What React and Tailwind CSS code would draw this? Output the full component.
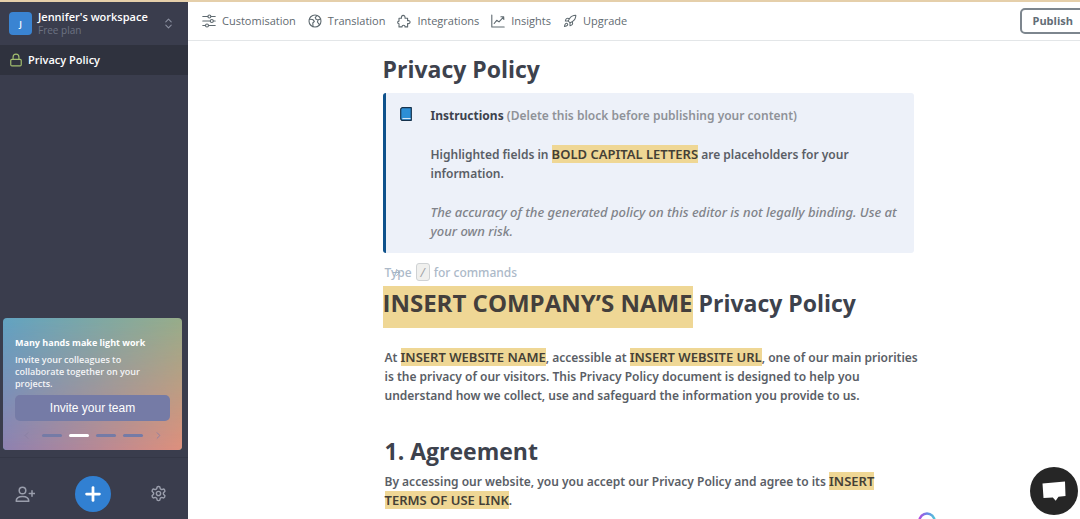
import React from "react";
import {
  LuChevronsUpDown,
  LuLock,
  LuRocket,
  LuSettings,
  LuPlus,
  LuChevronLeft,
  LuChevronRight,
  LuArrowRight,
} from "react-icons/lu";

const SlidersIcon = () => (
  <svg viewBox="0 0 14 14" className="w-[14px] h-[14px]" fill="none" stroke="currentColor" strokeWidth="1.1" strokeLinecap="round">
    <path d="M.8 2.5h5M9 2.5h4.2M.8 7h7.4M11.4 7h1.8M.8 11.5h2.6M6.6 11.5h6.6" />
    <circle cx="7.4" cy="2.5" r="1.5" />
    <circle cx="9.8" cy="7" r="1.5" />
    <circle cx="5" cy="11.5" r="1.5" />
  </svg>
);

const GlobeIcon = () => (
  <svg viewBox="0 0 14 14" className="w-[14px] h-[14px]" fill="none" stroke="currentColor" strokeWidth="1.1" strokeLinejoin="round" strokeLinecap="round">
    <circle cx="7" cy="7" r="6" />
    <path d="M1.3 5.2l3.4.3 1.7 1.8-1.6 1.7.2 3.5M9 1.5L7.2 3.6l1 1.9 2 .3L9.4 8l2 2.7M10.2 5.8l2.6-.8" />
  </svg>
);

const PuzzleIcon = () => (
  <svg viewBox="0 0 14 14" className="w-[14px] h-[14px]" fill="none" stroke="currentColor" strokeWidth="1.1" strokeLinejoin="round" strokeLinecap="round">
    <path d="M2 4.2h2.5c-1-3.8 4.3-3.8 3.5 0h2.6v2.5c3.3-.8 3.3 3.6 0 2.8v3.4H8c.3-2.3-3.2-2.3-2.9 0H2V9.700c-1.8-.2-1.8-2.4 0-2.6z" />
  </svg>
);

const ChartIcon = () => (
  <svg viewBox="0 0 14 14" className="w-[14px] h-[14px]" fill="none" stroke="currentColor" strokeWidth="1.1" strokeLinecap="round" strokeLinejoin="round">
    <path d="M.8 1v12h12.4M3.2 9.5l2.5-3.2 2.3 1.6 4.7-5M9.9 2.7l2.8.2.1 2.6" />
  </svg>
);

const AddUserIcon = () => (
  <svg viewBox="0 0 20 18" className="w-[20px] h-[18px]" fill="none" stroke="currentColor" strokeWidth="1.5" strokeLinecap="round" strokeLinejoin="round">
    <circle cx="7.5" cy="5.5" r="3.3" />
    <path d="M1.2 16.2c0-3.2 2.3-4.8 6.3-4.8s6.3 1.6 6.3 4.8zM17 5.8v5.4M14.3 8.5h5.4" />
  </svg>
);

const BookIcon = () => (
  <svg viewBox="0 0 12 14" className="w-[12px] h-[14px]">
    <path d="M2 .7h9.3v12.6H1.8L.7 12V2z" fill="#2c8fd6" stroke="#16324c" strokeWidth="1.2" strokeLinejoin="round" />
    <path d="M2.4 11.6h8.2" stroke="#e6f1fa" strokeWidth="1" />
  </svg>
);

const menu = [
  { label: "Customisation", icon: <SlidersIcon /> },
  { label: "Translation", icon: <GlobeIcon /> },
  { label: "Integrations", icon: <PuzzleIcon /> },
  { label: "Insights", icon: <ChartIcon /> },
  { label: "Upgrade", icon: <LuRocket className="w-[14px] h-[14px]" strokeWidth={1.8} /> },
];

const slides = [false, true, false, false];

const Mark = ({ children }) => (
  <mark className="bg-[#efd795] text-[#443f36] text-[13px] font-semibold">{children}</mark>
);

const Sidebar = () => {
  return (
    <aside className="w-[188px] shrink-0 flex flex-col bg-[#3a3d4d] text-white">
      <button className="h-[43px] flex items-center gap-[6px] pl-[9px] pr-[13px] text-left">
        <span className="w-[23px] h-[23px] rounded-[4px] bg-[#3a84d2] text-[9px] font-semibold flex items-center justify-center">
          J
        </span>
        <span className="flex-1 flex flex-col">
          <span className="text-[11px] leading-[14px] font-semibold whitespace-nowrap">Jennifer's workspace</span>
          <span className="text-[10px] leading-[13px] text-[#6d7383]">Free plan</span>
        </span>
        <LuChevronsUpDown className="w-[13px] h-[13px] text-[#8b90a0]" />
      </button>
      <nav>
        <a href="#privacy" className="h-[30px] flex items-center gap-[5px] pl-[9px] bg-[#2f323e] text-[11px] font-semibold">
          <LuLock className="w-[14px] h-[14px] text-[#a3bf6f]" />
          Privacy Policy
        </a>
      </nav>
      <section className="mt-auto ml-[3px] mr-[6px] h-[132px] rounded-[4px] px-[12px] pt-[18px] bg-[linear-gradient(to_right,#62a3c2,#97ad8a)] relative overflow-hidden">
        <div className="absolute inset-0 bg-[linear-gradient(to_right,#8e81b0,#de8f7c)] [mask-image:linear-gradient(to_bottom,transparent,black)]"></div>
        <div className="relative">
          <h2 className="text-[9px] leading-[14px] font-bold">Many hands make light work</h2>
          <p className="text-[9px] leading-[12px] font-semibold mt-[4px] text-[#f4f4f6]">
            Invite your colleagues to
            <br />
            collaborate together on your
            <br />
            projects.
          </p>
          <button className="w-full h-[26px] mt-[5px] rounded-[5px] bg-[#757ba6] text-[12px] font-medium font-['Liberation_Sans',sans-serif]">
            Invite your team
          </button>
          <div className="flex items-center justify-center gap-[7px] mt-[9px] text-[#8a7fa3]">
            <button aria-label="Previous" className="mr-[3px]">
              <LuChevronLeft className="w-[11px] h-[11px]" />
            </button>
            {slides.map((active, index) => (
              <span key={index} className={`w-[20px] h-[3px] rounded-full ${active ? "bg-white" : "bg-[#757ba6]"}`}></span>
            ))}
            <button aria-label="Next" className="ml-[3px]">
              <LuChevronRight className="w-[11px] h-[11px]" />
            </button>
          </div>
        </div>
      </section>
      <div className="mt-[7px] h-[62px] pt-[10px] border-t border-[#343746] flex items-center justify-between pl-[15px] pr-[21px] text-[#9a9eac]">
        <button aria-label="Invite people">
          <AddUserIcon />
        </button>
        <button aria-label="Add new" className="w-[36px] h-[36px] rounded-full bg-[#3180d2] text-white flex items-center justify-center">
          <LuPlus className="w-[22px] h-[22px]" strokeWidth={3} />
        </button>
        <button aria-label="Settings">
          <LuSettings className="w-[17px] h-[17px]" />
        </button>
      </div>
    </aside>
  );
};

const Header = () => {
  return (
    <header className="h-[39px] shrink-0 flex items-center justify-between pl-[14px] border-b border-[#e3e6e8] text-[11px] font-medium text-[#5f6a70]">
      <nav className="flex items-center gap-[12px]">
        {menu.map((item) => (
          <button key={item.label} className="flex items-center gap-[6px]">
            {item.icon}
            {item.label}
          </button>
        ))}
      </nav>
      <button className="h-[26px] pl-[10px] pr-[10px] -mr-[5px] border-2 border-[#7d868e] rounded-[5px] font-bold text-[#626d76]">
        Publish
      </button>
    </header>
  );
};

const Document = () => {
  return (
    <article className="w-[531px] mx-auto text-[12px] leading-[19px] font-semibold text-[#5a5e66] font-['Noto_Sans','Open_Sans',sans-serif]">
      <h1 className="text-[23px] leading-[32px] font-bold text-[#3d424d] mt-[12px] font-['Open_Sans',sans-serif]">Privacy Policy</h1>
      <section className="mt-[8px] h-[160px] flex border-l-[3px] border-[#0f528c] rounded-[3px] bg-[#edf1f9] pt-[13px] pl-[14px]">
        <div className="w-[31px] shrink-0 pt-px">
          <BookIcon />
        </div>
        <div className="whitespace-nowrap">
          <p className="text-[#8f9298]">
            <strong className="font-bold text-[#3d424d]">Instructions</strong> (Delete this block before publishing your content)
          </p>
          <p className="mt-[20px]">
            Highlighted fields in <Mark>BOLD CAPITAL LETTERS</Mark> are placeholders for your
            <br />
            information.
          </p>
          <p className="mt-[20px] italic text-[13px] font-medium text-[#808389]">
            The accuracy of the generated policy on this editor is not legally binding. Use at
            <br />
            your own risk.
          </p>
        </div>
      </section>
      <p className="mt-[9px] h-[20px] flex items-center gap-[4px] pl-[2px] font-medium text-[#acb9c8]">
        <span className="relative">
          Type
          <LuArrowRight className="absolute left-[6px] top-[4px] w-[11px] h-[11px] text-[#9fb0c2]" />
        </span>
        <kbd className="w-[14px] h-[18px] rounded-[3px] border border-[#cfd2d4] bg-[#f0f0ee] flex items-center justify-center font-['Open_Sans',sans-serif] italic text-[#9b9fa3]">
          /
        </kbd>
        for commands
      </p>
      <h1 className="mt-[4px] text-[23px] leading-[34px] font-bold text-[#3d424d] whitespace-nowrap flex font-['Open_Sans',sans-serif]">
        <mark className="bg-[#efd795] text-[#443f3c] text-[24px] h-[42px]">INSERT COMPANY’S NAME</mark>
        <span>&nbsp;Privacy Policy</span>
      </h1>
      <p className="mt-[20px] pl-[2px] whitespace-nowrap">
        At <Mark>INSERT WEBSITE NAME</Mark>, accessible at <Mark>INSERT WEBSITE URL</Mark>, one of our main priorities
        <br />
        is the privacy of our visitors. This Privacy Policy document is designed to help you
        <br />
        understand how we collect, use and safeguard the information you provide to us.
      </p>
      <h2 className="mt-[30px] pl-[2px] text-[23px] leading-[32px] font-bold text-[#3d424d] font-['Open_Sans',sans-serif]">1. Agreement</h2>
      <p className="mt-[5px] pl-[2px] whitespace-nowrap">
        By accessing our website, you you accept our Privacy Policy and agree to its <Mark>INSERT</Mark>
        <br />
        <Mark>TERMS OF USE LINK</Mark>.
      </p>
    </article>
  );
};

const App = () => {
  return (
    <div className="h-screen flex flex-col overflow-hidden bg-white border-t-2 border-[#e5cfaa] font-['Open_Sans','Noto_Sans',sans-serif]">
      <div className="flex-1 min-h-0 flex">
        <Sidebar />
        <main className="flex-1 min-w-0 flex flex-col overflow-hidden">
          <Header />
          <div className="flex-1 min-h-0 overflow-hidden pl-[28px]">
            <Document />
          </div>
        </main>
      </div>
      <svg viewBox="0 0 18 18" className="fixed right-[144px] -bottom-[11px] w-[18px] h-[18px]" fill="none">
        <defs>
          <linearGradient id="ring" x1="0" y1="0" x2="1" y2="0">
            <stop offset="0" stopColor="#b04fe0" />
            <stop offset="0.5" stopColor="#6a86e8" />
            <stop offset="1" stopColor="#55c3d8" />
          </linearGradient>
        </defs>
        <circle cx="9" cy="9" r="7.5" stroke="url(#ring)" strokeWidth="2.5" />
      </svg>
      <button aria-label="Open chat" className="fixed right-[2px] bottom-[4px] w-[48px] h-[48px] rounded-full bg-[#262626] flex items-center justify-center">
        <svg viewBox="0 0 24 20" className="w-[24px] h-[20px]" fill="white">
          <path d="M.5 2.5L23 .5l.5 14.5-7 .8-2.8 4-2.9-3.3L1.5 17z" />
        </svg>
      </button>
    </div>
  );
};

export default App;
